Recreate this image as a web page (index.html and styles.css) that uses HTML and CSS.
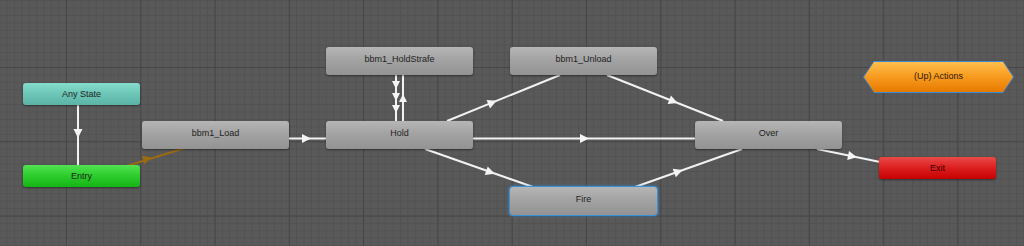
FILE: index.html
```html
<!DOCTYPE html>
<html lang="en">
<head>
    <meta charset="UTF-8">
    <title>Animator</title>
    <link rel="stylesheet" href="styles.css">
</head>
<body>

<div class="graph">
    <!-- transitions, drawn under the states -->
    <svg class="edges" width="1024" height="246" viewBox="0 0 1024 246">
        <g stroke="#f2f2f2" stroke-width="2" fill="none">
            <line x1="78" y1="100" x2="78" y2="170" />
            <line x1="280" y1="138.5" x2="335" y2="138.5" />
            <line x1="396" y1="70" x2="396" y2="126" />
            <line x1="403" y1="70" x2="403" y2="126" />
            <line x1="447" y1="121" x2="560" y2="75" />
            <line x1="607" y1="75" x2="723" y2="121" />
            <line x1="460" y1="138.5" x2="705" y2="138.5" />
            <line x1="425" y1="149" x2="533" y2="187" />
            <line x1="635" y1="187" x2="742" y2="149" />
            <line x1="817" y1="149" x2="885" y2="163" />
        </g>
        <line x1="120" y1="168" x2="190" y2="146.5" stroke="#9a6a15" stroke-width="2" />

        <g fill="#f4f4f4">
            <polygon points="-4,-4.5 5,0 -4,4.5" transform="translate(78 133) rotate(90)" />
            <polygon points="-4,-4.5 5,0 -4,4.5" transform="translate(306 138.5)" />
            <polygon points="-4,-4 4,0 -4,4" transform="translate(396 85) rotate(90)" />
            <polygon points="-4,-4 4,0 -4,4" transform="translate(396 97) rotate(90)" />
            <polygon points="-4,-4 4,0 -4,4" transform="translate(396 109) rotate(90)" />
            <polygon points="-4,-4 4,0 -4,4" transform="translate(403 98) rotate(-90)" />
            <polygon points="-4,-4.5 5,0 -4,4.5" transform="translate(492 102.7) rotate(-22.2)" />
            <polygon points="-4,-4.5 5,0 -4,4.5" transform="translate(673 101.2) rotate(21.6)" />
            <polygon points="-4,-4.5 5,0 -4,4.5" transform="translate(584 138.5)" />
            <polygon points="-4,-4.5 5,0 -4,4.5" transform="translate(490 172) rotate(19.4)" />
            <polygon points="-4,-4.5 5,0 -4,4.5" transform="translate(678 171.7) rotate(-19.6)" />
            <polygon points="-4,-4.5 5,0 -4,4.5" transform="translate(852 156.3) rotate(11.8)" />
        </g>
        <polygon points="-4,-4.5 5,0 -4,4.5" fill="#9a6a15" transform="translate(147 158.8) rotate(-17.1)" />
    </svg>

    <div class="node small any-state">Any State</div>
    <div class="node small entry">Entry</div>
    <div class="node small exit">Exit</div>

    <div class="node state n-load">bbm1_Load</div>
    <div class="node state n-strafe">bbm1_HoldStrafe</div>
    <div class="node state n-unload">bbm1_Unload</div>
    <div class="node state n-hold">Hold</div>
    <div class="node state n-over">Over</div>
    <div class="node state n-fire selected">Fire</div>

    <div class="machine">
        <div class="machine-inner">(Up) Actions</div>
    </div>
</div>

</body>
</html>
```

FILE: styles.css
```css
body {
    margin: 0;
    padding: 0;
    background: #585858;
    font-family: "Liberation Sans", Arial, sans-serif;
}
.graph {
    position: relative;
    width: 1024px;
    height: 246px;
    overflow: hidden;
    background-color: #595959;
    background-image:
        linear-gradient(90deg, #464646 1px, transparent 1px),
        linear-gradient(#464646 1px, transparent 1px),
        linear-gradient(90deg, #525252 1px, transparent 1px),
        linear-gradient(#525252 1px, transparent 1px);
    background-size: 74.3px 74.3px, 74.3px 74.3px, 7.43px 7.43px, 7.43px 7.43px;
    background-position: 66px 67px, 66px 67px, 66px 67px, 66px 67px;
}
.edges {
    position: absolute;
    left: 0;
    top: 0;
}

/* states */
.node {
    position: absolute;
    display: flex;
    align-items: center;
    justify-content: center;
    box-sizing: border-box;
    border-radius: 3px;
    font-size: 9px;
    color: #1e1e1e;
    box-shadow: 0 1px 2px rgba(0, 0, 0, 0.45);
}
.small {
    width: 117px;
    height: 22px;
}
.state {
    width: 147px;
    height: 28px;
    padding-bottom: 5px;
    background: linear-gradient(#b6b6b6, #a3a3a3 45%, #939393);
}
.any-state {
    left: 23px;
    top: 83px;
    background: linear-gradient(#86dccd, #6cc5b6 50%, #5cb4a6);
}
.entry {
    left: 23px;
    top: 165px;
    background: linear-gradient(#52e352, #2ccc2c 50%, #15b515);
}
.exit {
    left: 879px;
    top: 157px;
    color: #3a0000;
    background: linear-gradient(#ea4a4a, #dc1e1e 50%, #c80000);
}
.n-load {
    left: 142px;
    top: 121px;
}
.n-strafe {
    left: 326px;
    top: 47px;
}
.n-unload {
    left: 510px;
    top: 47px;
}
.n-hold {
    left: 326px;
    top: 121px;
}
.n-over {
    left: 695px;
    top: 121px;
}
.n-fire {
    left: 510px;
    top: 187px;
}
.selected {
    box-shadow: 0 0 0 1px #3b8ed8, 0 0 3px 1px rgba(59, 142, 216, 0.8);
}

/* sub state machine */
.machine {
    position: absolute;
    left: 863px;
    top: 61px;
    width: 151px;
    height: 32px;
    padding: 1px;
    box-sizing: border-box;
    background: #3a8ad6;
    clip-path: polygon(0 50%, 11px 0, calc(100% - 11px) 0, 100% 50%, calc(100% - 11px) 100%, 11px 100%);
}
.machine-inner {
    height: 100%;
    display: flex;
    align-items: center;
    justify-content: center;
    font-size: 9px;
    color: #2a1800;
    padding-bottom: 2px;
    box-sizing: border-box;
    background: linear-gradient(#ffbf4c, #f79a1e 50%, #e67a00);
    clip-path: polygon(0 50%, 10px 0, calc(100% - 10px) 0, 100% 50%, calc(100% - 10px) 100%, 10px 100%);
}
```
